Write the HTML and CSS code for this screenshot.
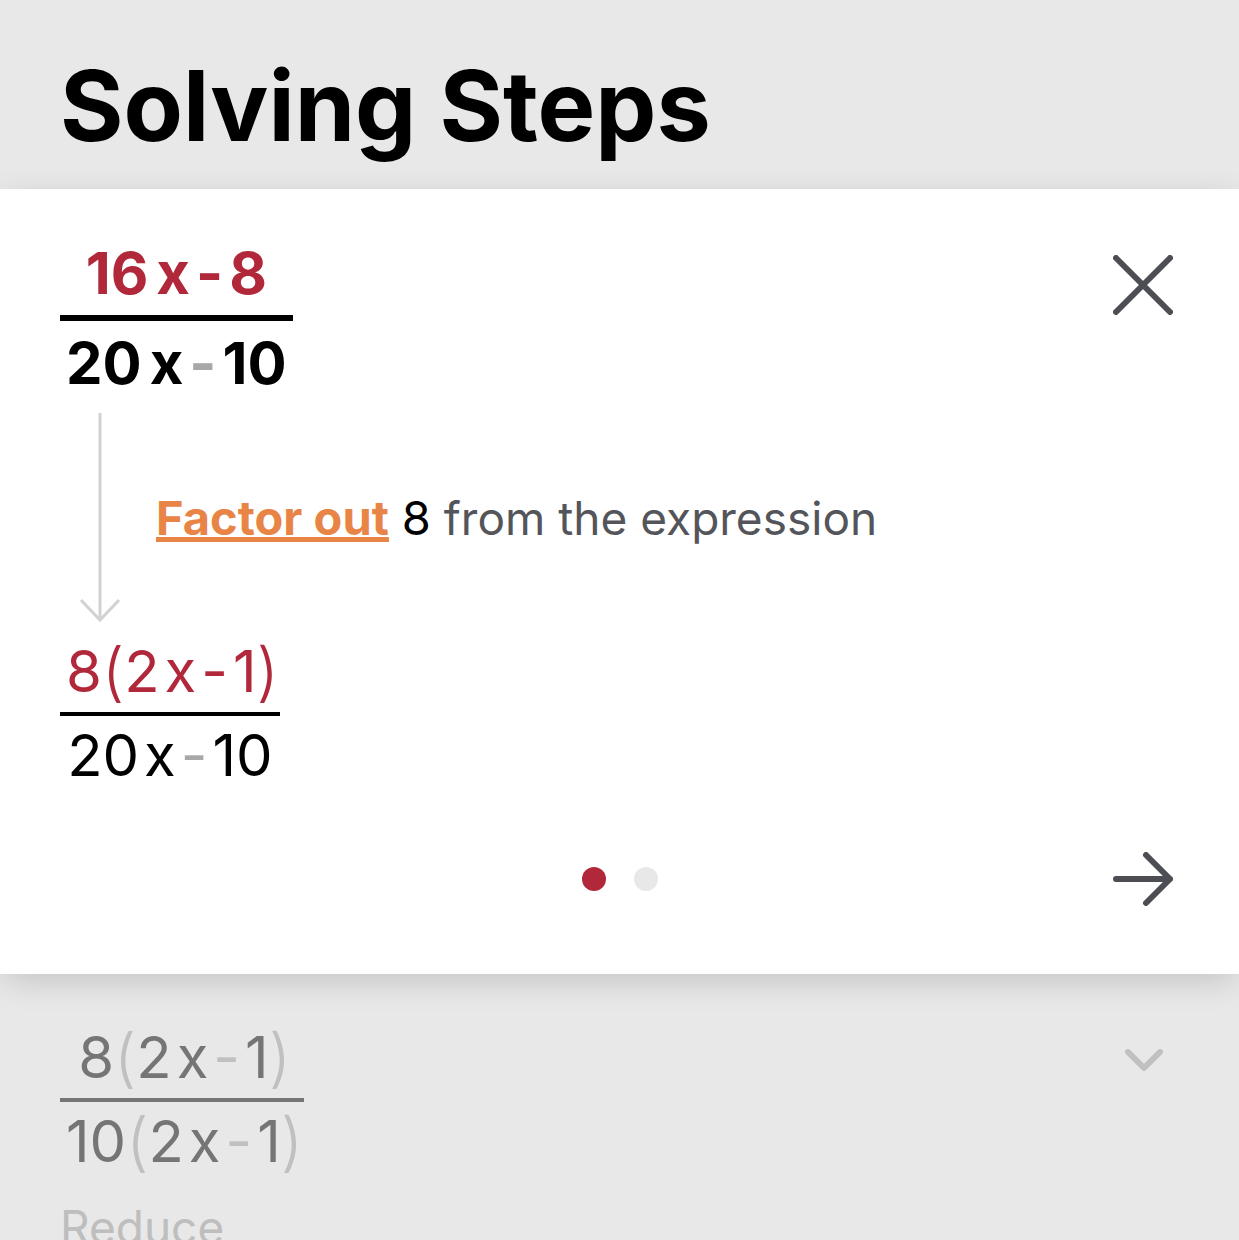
FILE: index.html
```
<!DOCTYPE html>
<html lang="en">
<head>
<meta charset="UTF-8">
<meta name="viewport" content="width=device-width, initial-scale=1.0">
<title>Solving Steps</title>
<link rel="stylesheet" href="styles.css">
</head>
<body>
<header class="page-header">
    <h1>Solving Steps</h1>
</header>

<main>
    <section class="card">
        <div class="card-top">
            <div class="fraction bold">
                <div class="row red"><span>16</span><span>x</span><span class="minus">-</span><span>8</span></div>
                <div class="bar"></div>
                <div class="row"><span>20</span><span>x</span><span class="minus muted">-</span><span>10</span></div>
            </div>
            <button type="button" class="icon-button" aria-label="Close">
                <svg width="60" height="60" viewBox="0 0 60 60"><path d="M3 3L57 57M57 3L3 57"/></svg>
            </button>
        </div>

        <div class="explain">
            <svg class="down-arrow" width="40" height="210" viewBox="0 0 40 210"><path d="M20 0V207M1 187L20 207L39 187"/></svg>
            <p><a href="#factor-out">Factor out</a> <span class="value">8</span> from the expression</p>
        </div>

        <div class="fraction">
            <div class="row red"><span>8</span><span class="paren">(</span><span>2</span><span>x</span><span>-</span><span>1</span><span class="paren">)</span></div>
            <div class="bar"></div>
            <div class="row"><span>20</span><span>x</span><span class="muted">-</span><span>10</span></div>
        </div>

        <div class="card-nav">
            <div class="dots">
                <span class="dot active"></span>
                <span class="dot"></span>
            </div>
            <button type="button" class="icon-button" aria-label="Next step">
                <svg width="60" height="54" viewBox="0 0 60 54"><path d="M3 27H57M33 3L57 27L33 51"/></svg>
            </button>
        </div>
    </section>

    <section class="next-step">
        <div class="next-top">
            <div class="fraction faded">
                <div class="row"><span>8</span><span class="paren muted">(</span><span>2</span><span>x</span><span class="muted">-</span><span>1</span><span class="paren muted">)</span></div>
                <div class="bar"></div>
                <div class="row"><span>10</span><span class="paren muted">(</span><span>2</span><span>x</span><span class="muted">-</span><span>1</span><span class="paren muted">)</span></div>
            </div>
            <button type="button" class="icon-button chevron" aria-label="Expand step">
                <svg width="38" height="24" viewBox="0 0 38 24"><path d="M3 3L19 19L35 3"/></svg>
            </button>
        </div>
        <p>Reduce</p>
    </section>
</main>
</body>
</html>
```
FILE: styles.css
```
* {
    box-sizing: border-box;
}
html {
    height: 100%;
    overflow: hidden;
}
body {
    font-family: Inter, "Liberation Sans", sans-serif;
    margin: 0;
    background-color: #e8e8e8;
    color: #000;
}
h1, p {
    margin: 0;
}
.page-header {
    padding: 46px 60px 23px;
}
h1 {
    font-size: 97px;
    line-height: 120px;
    font-weight: 700;
}
.card {
    position: relative;
    background-color: #fff;
    padding: 47px 66px 68px 60px;
    box-shadow: 0 8px 32px -4px rgba(0, 0, 0, 0.18);
}
.card-top, .next-top {
    display: flex;
    justify-content: space-between;
    align-items: flex-start;
}
.fraction {
    display: inline-flex;
    flex-direction: column;
    align-items: center;
    font-size: 58px;
    line-height: 74px;
}
.bold {
    font-weight: 700;
}
.row {
    display: flex;
    gap: 5px;
    padding: 0 6px;
}
.bold .row {
    gap: 8px;
    padding: 0 6px;
}
.minus {
    margin: 0 -2px;
}
.paren {
    font-size: 64px;
    font-weight: 300;
    margin: 0 -5px;
}
.bar {
    align-self: stretch;
    height: 4px;
    margin: 4px 0 2px;
    background-color: #000;
}
.bold .bar {
    height: 6px;
    margin: 5px 0;
}
.red {
    color: #b0283a;
}
.muted {
    color: #a8a8a8;
}
.icon-button {
    display: flex;
    padding: 0;
    border: none;
    background: none;
    cursor: pointer;
}
.icon-button path {
    fill: none;
    stroke: #4d4e53;
    stroke-width: 6;
    stroke-linecap: round;
    stroke-linejoin: round;
}
.card-top .icon-button {
    margin-top: 19px;
}
.explain {
    display: flex;
    align-items: center;
    gap: 36px;
    padding: 13px 0 11px 20px;
}
.down-arrow path {
    fill: none;
    stroke: #d2d2d2;
    stroke-width: 3;
}
.explain p, .next-step p {
    font-size: 46px;
    line-height: 60px;
    color: #54555a;
}
.explain a {
    color: #e88546;
    font-size: 47px;
    font-weight: 700;
    text-decoration: underline;
    text-decoration-thickness: 5px;
    text-underline-offset: 2px;
    text-decoration-skip-ink: none;
}
.explain .value {
    font-size: 47px;
    color: #000;
}
.card-nav {
    display: grid;
    grid-template-columns: 66px 1fr 60px;
    align-items: center;
    margin-top: 60px;
}
.dots {
    grid-column: 2;
    display: flex;
    justify-content: center;
    gap: 28px;
}
.dot {
    width: 24px;
    height: 24px;
    border-radius: 50%;
    background-color: #e8e8e8;
}
.dot.active {
    background-color: #b0283a;
}
.next-step {
    padding: 46px 76px 24px 60px;
}
.faded {
    color: #757575;
}
.faded .muted {
    color: #c0c0c0;
}
.faded .bar {
    background-color: #757575;
}
.chevron {
    margin-top: 29px;
}
.chevron path {
    stroke: #c0c0c0;
}
.next-step p {
    margin-top: 19px;
    color: #bebebe;
}
```
